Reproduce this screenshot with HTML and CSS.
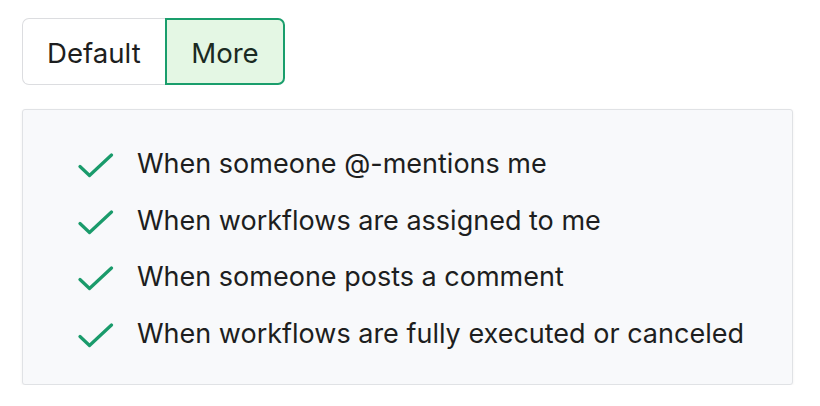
FILE: index.html
```html
<!DOCTYPE html>
<html>
<head>
<meta charset="utf-8">
<link rel="stylesheet" href="styles.css">
</head>
<body>
<div class="page">
  <div class="seg">
    <button class="seg-btn">Default</button>
    <button class="seg-btn active">More</button>
  </div>
  <div class="panel">
    <ul class="list">
      <li class="row"><svg class="check" viewBox="0 0 36 26"><path d="M2 13.5 L11.5 22.5 L33.5 2" /></svg><span>When someone @-mentions me</span></li>
      <li class="row"><svg class="check" viewBox="0 0 36 26"><path d="M2 13.5 L11.5 22.5 L33.5 2" /></svg><span>When workflows are assigned to me</span></li>
      <li class="row"><svg class="check" viewBox="0 0 36 26"><path d="M2 13.5 L11.5 22.5 L33.5 2" /></svg><span>When someone posts a comment</span></li>
      <li class="row"><svg class="check" viewBox="0 0 36 26"><path d="M2 13.5 L11.5 22.5 L33.5 2" /></svg><span>When workflows are fully executed or canceled</span></li>
    </ul>
  </div>
</div>
</body>
</html>
```
FILE: styles.css
```css
html, body {
  margin: 0;
  padding: 0;
  background: #ffffff;
}
body {
  font-family: Inter, "Liberation Sans", sans-serif;
  color: #1d1e20;
}
.page {
  padding: 18px 27px 0 22px;
  display: flex;
  flex-direction: column;
  align-items: flex-start;
  gap: 24px;
}
.seg {
  display: flex;
}
.seg-btn {
  font-family: inherit;
  font-size: 27.6px;
  color: #1d1e20;
  background: #ffffff;
  border: 1.5px solid #dcdde0;
  height: 67px;
  padding: 2px 24px 0;
  margin: 0;
  cursor: pointer;
}
.seg-btn:first-child {
  border-radius: 7px 0 0 7px;
  border-right: none;
  padding-right: 24.5px;
}
.seg-btn.active {
  background: #e4f7e4;
  border: 2px solid #1a9e6c;
  border-radius: 0 7px 7px 0;
  color: #1a2a22;
}
.panel {
  align-self: stretch;
  background: #f8f9fb;
  border: 1.5px solid #e0e2e5;
  border-radius: 3px;
  box-shadow: 0 1px 3px rgba(0,0,0,0.06);
  padding: 24px 0 24px 0;
}
.list {
  list-style: none;
  margin: 0;
  padding: 0 0 0 55px;
  display: flex;
  flex-direction: column;
}
.row {
  display: flex;
  align-items: center;
  height: 56.5px;
  font-size: 27px;
  gap: 23px;
}
.row span {
  padding-top: 3px;
}
.check {
  width: 36px;
  height: 26px;
  margin-top: 8px;
  fill: none;
  stroke: #1a9b6b;
  stroke-width: 3.2;
  stroke-linecap: round;
  stroke-linejoin: round;
}
```
